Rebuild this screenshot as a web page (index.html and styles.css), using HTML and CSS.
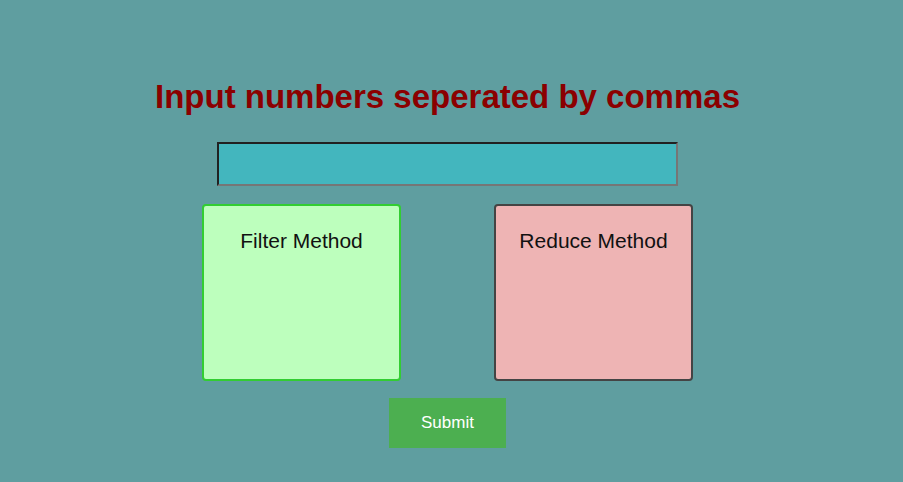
FILE: index.html
```html
<!DOCTYPE html>
<html lang="en">
<head>
<meta charset="utf-8">
<title>Array methods</title>
<link rel="stylesheet" href="styles.css">
</head>
<body>
<form class="panel">
  <h1 class="title"><label for="numbers">Input numbers seperated by commas</label></h1>
  <input class="numbers" id="numbers" type="text">
  <div class="results">
    <section class="card card-filter">Filter Method</section>
    <section class="card card-reduce">Reduce Method</section>
  </div>
  <button class="submit" type="button">Submit</button>
</form>
</body>
</html>
```
FILE: styles.css
```css
* {
  box-sizing: border-box;
}

body {
  margin: 0;
  padding: 77px 12px 32px 4px;
  background: #5f9ea0;
  font-family: Arial, "Liberation Sans", sans-serif;
  color: #111;
}

.panel {
  display: flex;
  flex-direction: column;
  align-items: center;
}

.title {
  margin: 0 0 25px;
  font-size: 33px;
  line-height: 40px;
  color: #8b0000;
  text-align: center;
}

.numbers {
  width: 100%;
  max-width: 461px;
  height: 44px;
  padding: 0 8px;
  border: 2px inset #767676;
  background: #43b6be;
  font: inherit;
  font-size: 20px;
}

.results {
  display: flex;
  justify-content: space-between;
  width: 100%;
  max-width: 491px;
  margin: 18px 0 17px;
}

.card {
  width: 199px;
  min-height: 177px;
  padding: 23px 8px;
  border: 2px solid #32cd32;
  border-radius: 4px;
  font-size: 21px;
  line-height: 24px;
  text-align: center;
}

.card-filter {
  background: #bdffbd;
}

.card-reduce {
  border-color: #444;
  background: #eeb4b4;
}

.submit {
  padding: 15px 32px;
  border: 0;
  background: #4caf50;
  color: #fff;
  font: inherit;
  font-size: 17px;
  line-height: 20px;
}
```
